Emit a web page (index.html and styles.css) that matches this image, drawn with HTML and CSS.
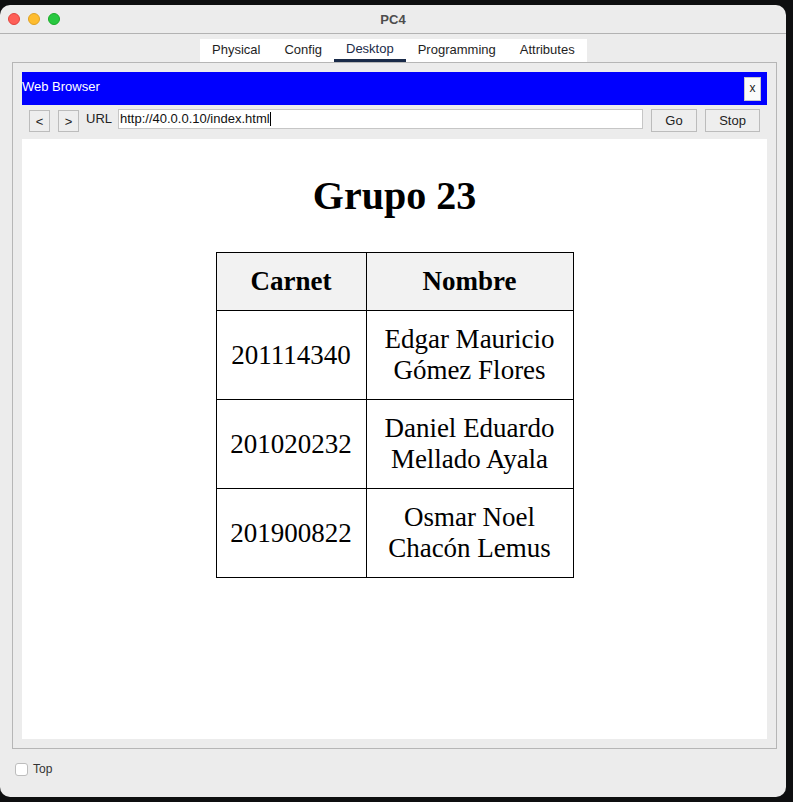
FILE: index.html
```html
<!DOCTYPE html>
<html lang="es">
<head>
<meta charset="utf-8">
<title>PC4</title>
<link rel="stylesheet" href="styles.css">
</head>
<body>
<div class="window">
  <div class="titlebar">
    <div class="lights">
      <span class="light red"></span>
      <span class="light yellow"></span>
      <span class="light green"></span>
    </div>
    <div class="title">PC4</div>
    <div></div>
  </div>
  <div class="tabs-row">
    <div class="tabs">
      <span class="tab">Physical</span>
      <span class="tab">Config</span>
      <span class="tab active">Desktop</span>
      <span class="tab">Programming</span>
      <span class="tab">Attributes</span>
    </div>
  </div>
  <div class="panel">
    <div class="appbar">
      <span class="apptitle">Web Browser</span>
      <span class="closebtn">x</span>
    </div>
    <div class="navrow">
      <span class="btn navbtn">&lt;</span>
      <span class="btn navbtn">&gt;</span>
      <span class="urllabel">URL</span>
      <div class="urlinput">http://40.0.0.10/index.html<span class="caret"></span></div>
      <span class="btn gobtn">Go</span>
      <span class="btn stopbtn">Stop</span>
    </div>
    <div class="content">
      <h1 class="heading">Grupo 23</h1>
      <table class="grid">
        <thead>
          <tr><th class="c1">Carnet</th><th class="c2">Nombre</th></tr>
        </thead>
        <tbody>
          <tr><td>201114340</td><td>Edgar Mauricio<br>Gómez Flores</td></tr>
          <tr><td>201020232</td><td>Daniel Eduardo<br>Mellado Ayala</td></tr>
          <tr><td>201900822</td><td>Osmar Noel<br>Chacón Lemus</td></tr>
        </tbody>
      </table>
    </div>
  </div>
  <div class="footer">
    <span class="checkbox"></span>
    <span class="toplabel">Top</span>
  </div>
</div>
</body>
</html>
```
FILE: styles.css
```css
html, body {
  margin: 0;
  padding: 0;
}
body {
  background: #0e0f10;
  width: 793px;
  height: 802px;
  overflow: hidden;
  font-family: "Liberation Sans", Arial, sans-serif;
}
.window {
  width: 786px;
  height: 792px;
  margin-top: 5px;
  background: #ececec;
  border-radius: 10px;
  overflow: hidden;
  display: flex;
  flex-direction: column;
}
.titlebar {
  height: 28px;
  border-bottom: 1px solid #b2b2b2;
  display: grid;
  grid-template-columns: 1fr auto 1fr;
  align-items: center;
  flex: none;
}
.lights {
  display: flex;
  gap: 8px;
  padding-left: 8px;
}
.light {
  width: 12px;
  height: 12px;
  border-radius: 50%;
  box-sizing: border-box;
}
.red { background: #fe5f57; border: 0.5px solid #e0443e; }
.yellow { background: #febc2e; border: 0.5px solid #dea123; }
.green { background: #28c840; border: 0.5px solid #1aab29; }
.title {
  font-size: 13px;
  font-weight: bold;
  color: #4d4d4d;
}
.tabs-row {
  height: 28px;
  padding-left: 200px;
  display: flex;
  align-items: flex-end;
  flex: none;
}
.tabs {
  display: flex;
  background: #fff;
  height: 23px;
}
.tab {
  padding: 0 12px;
  font-size: 13px;
  line-height: 21px;
  color: #1e1e1e;
  border-bottom: 2px solid transparent;
}
.tab.active {
  border-bottom: 3px solid #1a2b49;
  line-height: 20px;
  color: #1a2b49;
}
.panel {
  margin-left: 12px;
  width: 765px;
  height: 687px;
  box-sizing: border-box;
  border: 1px solid #b6b6b6;
  padding: 9px;
  display: flex;
  flex-direction: column;
  flex: none;
}
.appbar {
  height: 33px;
  background: #0000ff;
  display: flex;
  align-items: center;
  justify-content: space-between;
  padding-right: 6px;
  flex: none;
}
.apptitle {
  color: #fff;
  font-size: 13px;
  margin-top: -4px;
}
.closebtn {
  width: 17px;
  height: 24px;
  box-sizing: border-box;
  background: #fbfbfb;
  border: 1px solid #c8c8c8;
  font-size: 12px;
  line-height: 21px;
  text-align: center;
  color: #222;
}
.navrow {
  height: 34px;
  display: flex;
  align-items: flex-start;
  padding: 0 7px;
  gap: 8px;
  flex: none;
}
.btn {
  box-sizing: border-box;
  background: #eeeeee;
  border: 1px solid #bcbcbc;
  font-size: 13px;
  color: #222;
  text-align: center;
}
.navbtn {
  width: 21px;
  height: 22px;
  margin-top: 5px;
  line-height: 21px;
}
.urllabel {
  font-size: 13px;
  color: #222;
  margin-left: -1px;
  margin-top: 6px;
  line-height: 15px;
}
.urlinput {
  width: 525px;
  height: 20px;
  margin-top: 4px;
  margin-left: -2px;
  box-sizing: border-box;
  background: #fff;
  border: 1px solid #c6c6c6;
  font-size: 13px;
  line-height: 18px;
  padding-left: 1px;
  color: #111;
  display: flex;
  align-items: center;
}
.caret {
  display: inline-block;
  width: 1px;
  height: 14px;
  background: #000;
}
.gobtn {
  width: 46px;
  height: 23px;
  margin-top: 4px;
  line-height: 21px;
}
.stopbtn {
  width: 55px;
  height: 23px;
  margin-top: 4px;
  line-height: 21px;
}
.content {
  background: #fff;
  height: 600px;
  flex: none;
  padding-top: 34px;
  box-sizing: border-box;
  font-family: "Liberation Serif", "Times New Roman", serif;
  color: #000;
}
.heading {
  margin: 0 0 33px;
  font-size: 40px;
  line-height: 46px;
  text-align: center;
  font-weight: bold;
}
.grid {
  border-collapse: collapse;
  margin: 0 auto;
  border: 1px solid #000;
}
.grid th, .grid td {
  border: 1px solid #000;
  font-size: 27px;
  line-height: 31px;
  padding: 13px 0;
  text-align: center;
}
.grid th {
  background: #f2f2f2;
  font-weight: bold;
}
.c1 { width: 149px; }
.c2 { width: 206px; }
.footer {
  flex: 1;
  display: flex;
  align-items: center;
  padding-left: 15px;
  gap: 5px;
  padding-bottom: 8px;
}
.checkbox {
  width: 13px;
  height: 13px;
  box-sizing: border-box;
  background: #fff;
  border: 1px solid #bdbdbd;
  border-radius: 3px;
}
.toplabel {
  font-size: 12px;
  color: #333;
}
```
